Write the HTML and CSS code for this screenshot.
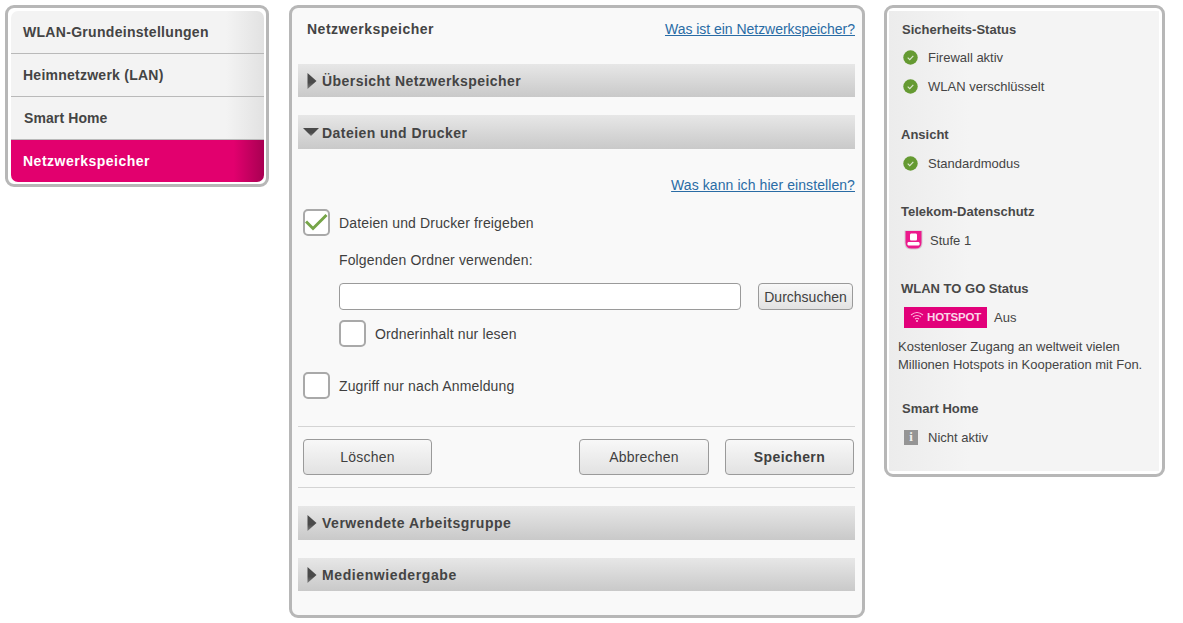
FILE: index.html
```html
<!DOCTYPE html>
<html lang="de">
<head>
<meta charset="utf-8">
<title>Netzwerkspeicher</title>
<link rel="stylesheet" href="styles.css">
</head>
<body>
<svg class="defs" width="0" height="0"><defs><linearGradient id="arrowfill" x1="0" y1="0" x2="0" y2="1"><stop offset="0" stop-color="#4a4a4a"/><stop offset="0.6" stop-color="#4a4a4a"/><stop offset="1" stop-color="#7c7c7c"/></linearGradient></defs></svg>
<div class="page">
  <nav class="panel nav-panel">
    <ul class="nav">
      <li class="nav-item">WLAN-Grundeinstellungen</li>
      <li class="nav-item nav-lan">Heimnetzwerk (LAN)</li>
      <li class="nav-item nav-smart">Smart Home</li>
      <li class="nav-item nav-active">Netzwerkspeicher</li>
    </ul>
  </nav>

  <main class="panel main-panel">
    <div class="title-row">
      <h1 class="title">Netzwerkspeicher</h1>
      <a class="link" href="#">Was ist ein Netzwerkspeicher?</a>
    </div>

    <div class="acc acc-a"><svg class="arrow-r" width="10" height="16" viewBox="0 0 10 16"><path d="M0.5 0 L9.5 8 L0.5 16 Z"/></svg><span>Übersicht Netzwerkspeicher</span></div>
    <div class="acc acc-b"><svg class="arrow-d" width="16" height="8" viewBox="0 0 16 8"><path d="M0 0 H16 L8 8 Z"/></svg><span>Dateien und Drucker</span></div>

    <div class="help-row"><a class="link link-help" href="#">Was kann ich hier einstellen?</a></div>

    <div class="check-row first-check">
      <span class="box"><svg width="23" height="23" viewBox="0 0 23 23"><path d="M1 10.5 L8 17.5 L21.5 4" fill="none" stroke="#76a548" stroke-width="3"/></svg></span>
      <span class="lbl">Dateien und Drucker freigeben</span>
    </div>
    <div class="folder-label">Folgenden Ordner verwenden:</div>
    <div class="folder-row">
      <input class="folder-input" type="text">
      <button class="btn btn-browse" type="button">Durchsuchen</button>
    </div>
    <div class="check-row second-check">
      <span class="box"></span>
      <span class="lbl">Ordnerinhalt nur lesen</span>
    </div>
    <div class="check-row third-check">
      <span class="box"></span>
      <span class="lbl">Zugriff nur nach Anmeldung</span>
    </div>

    <div class="actions">
      <button class="btn btn-action" type="button">Löschen</button>
      <div class="actions-right">
        <button class="btn btn-action" type="button">Abbrechen</button>
        <button class="btn btn-action btn-primary" type="button">Speichern</button>
      </div>
    </div>

    <div class="acc acc-c"><svg class="arrow-r" width="10" height="16" viewBox="0 0 10 16"><path d="M0.5 0 L9.5 8 L0.5 16 Z"/></svg><span>Verwendete Arbeitsgruppe</span></div>
    <div class="acc acc-d"><svg class="arrow-r" width="10" height="16" viewBox="0 0 10 16"><path d="M0.5 0 L9.5 8 L0.5 16 Z"/></svg><span>Medienwiedergabe</span></div>
  </main>

  <aside class="panel side-panel">
    <div class="side">
      <h2 class="side-head head-1">Sicherheits-Status</h2>
      <div class="status s-first"><svg class="ok" width="15" height="15" viewBox="0 0 16 16"><circle cx="8" cy="8" r="7.7" fill="#659a32"/><path d="M5 8.2 L7.2 10.3 L11 6.3" fill="none" stroke="#dfe9d2" stroke-width="1.2"/></svg><span>Firewall aktiv</span></div>
      <div class="status"><svg class="ok" width="15" height="15" viewBox="0 0 16 16"><circle cx="8" cy="8" r="7.7" fill="#659a32"/><path d="M5 8.2 L7.2 10.3 L11 6.3" fill="none" stroke="#dfe9d2" stroke-width="1.2"/></svg><span>WLAN verschlüsselt</span></div>

      <h2 class="side-head">Ansicht</h2>
      <div class="status"><svg class="ok" width="15" height="15" viewBox="0 0 16 16"><circle cx="8" cy="8" r="7.7" fill="#659a32"/><path d="M5 8.2 L7.2 10.3 L11 6.3" fill="none" stroke="#dfe9d2" stroke-width="1.2"/></svg><span>Standardmodus</span></div>

      <h2 class="side-head">Telekom-Datenschutz</h2>
      <div class="status"><svg class="shield" width="19" height="20" viewBox="0 0 19 20"><path d="M0.5 0.5 H18.5 V13 Q18.5 19.5 12 19.5 H7 Q0.5 19.5 0.5 13 Z" fill="#d3ccd2"/><path d="M1.5 1 H17.5 V12.5 Q17.5 18.5 11.5 18.5 H7.5 Q1.5 18.5 1.5 12.5 Z" fill="#ec1a8c"/><path d="M7 3.5 H12 Q13 3.5 13 5 V9 Q13 10.5 12 10.5 H7 Q6 10.5 6 9 V5 Q6 3.5 7 3.5 Z" fill="#fff"/><rect x="3.5" y="12" width="12" height="3.5" rx="1.2" fill="#fff"/></svg><span>Stufe 1</span></div>

      <h2 class="side-head">WLAN TO GO Status</h2>
      <div class="status"><span class="hotspot"><svg width="14" height="12" viewBox="0 0 14 12"><path d="M1 4 Q7 -1 13 4 M3 6 Q7 3 11 6 M5 8 Q7 6.6 9 8" fill="none" stroke="#ffb3dc" stroke-width="1.1"/><circle cx="7" cy="10" r="1.1" fill="#ffb3dc"/></svg><span class="hotspot-text">HOTSPOT</span></span><span>Aus</span></div>
      <p class="desc">Kostenloser Zugang an weltweit vielen<br>Millionen Hotspots in Kooperation mit Fon.</p>

      <h2 class="side-head head-1 head-smart">Smart Home</h2>
      <div class="status"><span class="info">i</span><span>Nicht aktiv</span></div>
    </div>
  </aside>
</div>
</body>
</html>
```
FILE: styles.css
```css
* { box-sizing: border-box; }
html, body { margin: 0; padding: 0; background: #fff; }
body { font-family: "Liberation Sans", Arial, sans-serif; font-size: 14px; color: #3f3f3f; }
.defs { position: absolute; }
.page { display: flex; align-items: flex-start; padding: 5px; }
.panel { border: 3px solid #b7b7b7; border-radius: 9px; background: #fff; }

/* left nav */
.nav-panel { width: 264px; height: 182px; padding: 3px 2px 2px 3px; }
.nav { list-style: none; margin: 0; padding: 0; border-radius: 7px; overflow: hidden; }
.nav-item { height: 43px; padding: 0 12px; display: flex; align-items: center; font-weight: bold; font-size: 14px; letter-spacing: 0.3px; color: #444; border-bottom: 1px solid #b9b9b9; background: linear-gradient(90deg, #f3f3f3 0, #f3f3f3 85%, #e2e2e2 100%); }
.nav-lan { letter-spacing: 0.25px; }
.nav-smart { padding-left: 13px; letter-spacing: 0.1px; }
.nav-active { height: 42px; border-bottom: 0; letter-spacing: 0.5px; color: #fff; background: linear-gradient(90deg, #e2006e 0, #e2006e 88%, #a80052 100%); }

/* main */
.main-panel { width: 576px; height: 613px; margin-left: 20px; padding: 0 7px 0 6px; background: #f9f9f9; }
.title-row { height: 42px; display: flex; justify-content: space-between; align-items: center; padding-left: 9px; margin-bottom: 14px; }
.title { margin: 0; font-size: 14px; font-weight: bold; letter-spacing: 0.5px; color: #444; }
.link { color: #2a6ca5; font-size: 14px; text-decoration: underline; letter-spacing: -0.03px; }
.link-help { letter-spacing: 0.08px; }
.acc { display: flex; align-items: center; font-weight: bold; font-size: 14px; letter-spacing: 0.45px; color: #444; background: linear-gradient(180deg, #e7e7e7 0, #c9c9c9 100%); }
.acc span { margin-left: 5px; }
.arrow-r, .arrow-d { flex: none; }
.acc-a { height: 33px; padding-left: 9px; }
.acc-b { height: 34px; margin-top: 18px; padding: 1px 0 0 5px; }
.acc-b span { margin-left: 3px; }
.acc-b .arrow-d { margin-top: -1px; }
.acc-c { height: 34px; margin-top: 18px; padding-left: 9px; letter-spacing: 0.52px; }
.acc-d { height: 33px; margin-top: 18px; padding-left: 9px; letter-spacing: 0.6px; }
.arrow-r path, .arrow-d path { fill: url(#arrowfill); }
.help-row { height: 20px; margin-top: 26px; display: flex; justify-content: flex-end; align-items: center; }
.check-row { display: flex; align-items: center; }
.box { width: 27px; height: 27px; flex: none; border: 2px solid #a9a9a9; border-radius: 5px; background: #fff; display: block; margin-right: 9px; }
.box svg { display: block; }
.lbl { color: #3f3f3f; letter-spacing: 0.14px; }
.first-check { margin: 14px 0 0 5px; }
.folder-label { margin: 14px 0 0 41px; height: 20px; line-height: 20px; letter-spacing: 0.14px; }
.folder-row { display: flex; margin: 13px 2px 0 41px; justify-content: space-between; }
.folder-input { width: 402px; height: 27px; border: 1px solid #9a9a9a; border-radius: 4px; background: #fff; padding: 0; }
.btn { font-family: inherit; font-size: 14px; color: #3f3f3f; border: 1px solid #9a9a9a; border-radius: 4px; background: linear-gradient(180deg, #f8f8f8 0, #e2e2e2 100%); padding: 0; letter-spacing: 0.2px; }
.btn-browse { width: 95px; height: 27px; letter-spacing: 0; }
.second-check { margin: 10px 0 0 41px; }
.third-check { margin: 25px 0 0 5px; }
.actions { display: flex; justify-content: space-between; height: 62px; margin-top: 27px; padding: 12px 1px 0 5px; border-top: 1px solid #d4d4d4; border-bottom: 1px solid #d4d4d4; }
.actions-right { display: flex; gap: 16px; }
.btn-action { width: 129px; height: 36px; }
.actions-right .btn-action:first-child { width: 130px; }
.btn-primary { font-weight: bold; letter-spacing: 0.4px; }

/* right */
.side-panel { width: 281px; height: 472px; margin-left: 19px; padding: 3px 3px 3px 2px; }
.side { height: 460px; padding-top: 8px; padding-left: 12px; background: linear-gradient(90deg, #ececec 0, #f4f4f4 30%, #f4f4f4 100%); font-size: 13px; }
.side-head { margin: 28px 0 0; height: 20px; line-height: 22px; font-size: 13px; font-weight: bold; color: #484848; }
.head-1 { margin-left: 1px; margin-top: 0; }
.head-smart { margin-top: 24px; }
.status { display: flex; align-items: center; height: 20px; margin: 9px 0 0 3px; color: #444; }
.s-first { margin-top: 8px; }
.ok { flex: none; margin: 0 10px 0 -1px; }
.shield { flex: none; margin-right: 7px; }
.hotspot { display: flex; align-items: center; justify-content: center; gap: 3px; width: 83px; height: 21px; background: #e2007a; margin-right: 7px; }
.hotspot-text { font-size: 11.5px; font-weight: bold; letter-spacing: -0.25px; color: #fbd4e8; }
.desc { margin: 11px 0 0 -3px; line-height: 18px; color: #444; }
.info { width: 14px; height: 15px; background: #959595; color: #f0f0f0; font-family: "Liberation Serif", serif; font-weight: bold; font-size: 13px; display: flex; align-items: center; justify-content: center; margin-right: 10px; }
```
